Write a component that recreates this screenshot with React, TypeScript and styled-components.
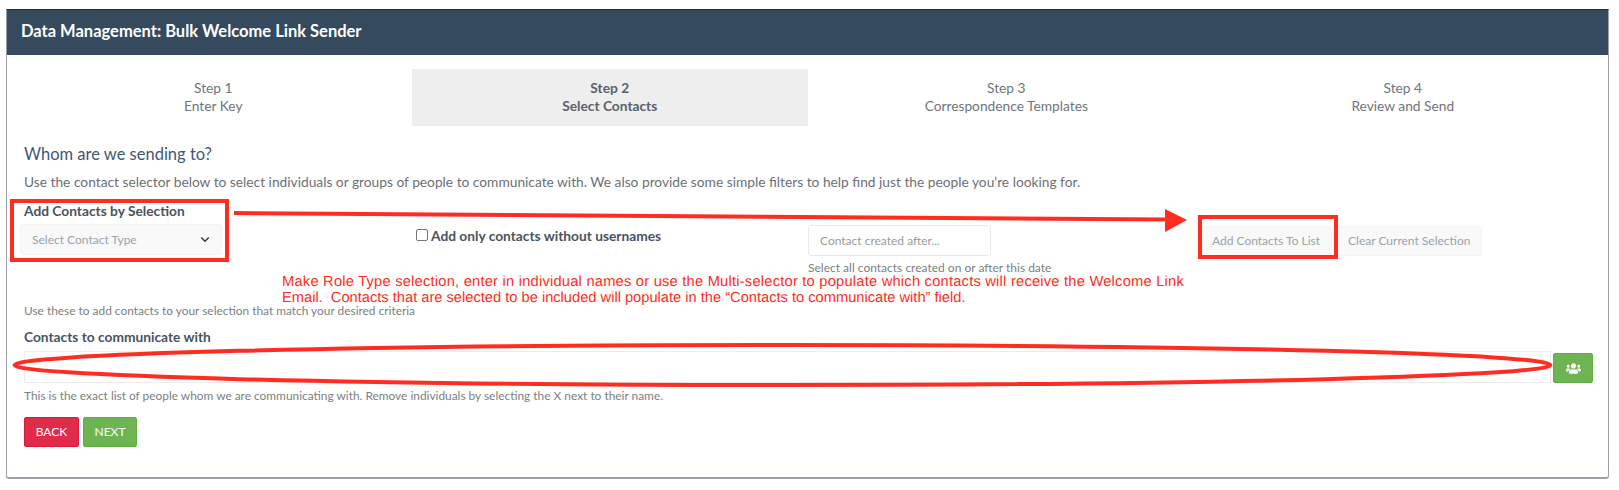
import React from 'react';
import styled, { createGlobalStyle } from 'styled-components';
import { FaUsers } from 'react-icons/fa';

const Global = createGlobalStyle`
  html, body { margin: 0; padding: 0; background: #fff; }
  body { font-family: Lato, "Open Sans", sans-serif; color: #6c7075; }
  * { box-sizing: border-box; }
`;

const Page = styled.div`
  position: relative;
  width: 1619px;
  height: 490px;
  padding: 9px 10px 12px 6px;
  overflow: hidden;
`;

const Panel = styled.section`
  height: 470px;
  border: 1px solid #9ba1a8;
  border-top-color: #12304f;
  border-bottom-width: 2px;
  border-radius: 0 0 3px 3px;
`;

const Header = styled.header`
  height: 45px;
  background: #364a5e;
  color: #fff;
  font-size: 16.5px;
  font-weight: 700;
  line-height: 43px;
  padding-left: 14px;
`;

const Body = styled.div`
  padding: 14px 9px 0 8px;
`;

const Steps = styled.div`
  display: grid;
  grid-template-columns: repeat(4, 396.5px);
`;

const Step = styled.div<{ $active?: boolean }>`
  height: 57px;
  padding-top: 10px;
  text-align: center;
  font-size: 13.75px;
  line-height: 18px;
  font-weight: ${(p) => (p.$active ? 700 : 400)};
  color: ${(p) => (p.$active ? '#5b626b' : '#6f757b')};
  background: ${(p) => (p.$active ? '#eeeeee' : 'transparent')};
`;

const Heading = styled.h2`
  margin: 16px 0 0 9px;
  font-size: 16.5px;
  line-height: 24px;
  font-weight: 400;
  color: #3f5873;
`;

const Lead = styled.p`
  margin: 6px 0 0 9px;
  font-size: 13.75px;
  line-height: 20px;
  color: #6c7075;
`;

const FilterRow = styled.div`
  display: grid;
  grid-template-columns: 392px 392px 392px 1fr;
  margin: 9px 0 0 5px;
  height: 101px;
`;

const Label = styled.label<{ $inset?: boolean }>`
  display: block;
  font-size: 13.75px;
  font-weight: 700;
  line-height: 20px;
  color: #4a5361;
  padding-left: ${(p) => (p.$inset ? '4px' : '0')};
`;

const SelectBox = styled.div`
  display: flex;
  align-items: center;
  justify-content: space-between;
  width: 202px;
  height: 31px;
  margin-top: 3px;
  padding: 0 11px 0 11px;
  border: 1px solid #f3f3f3;
  border-radius: 3px;
  background: #f9f9f9;
  font-size: 12px;
  color: #9aa3ab;
`;

const CheckCell = styled.div`
  display: flex;
  align-items: center;
  gap: 3px;
  height: 20px;
  margin: 24px 0 0 4px;
  font-size: 13.75px;
  font-weight: 700;
  color: #4a5361;
`;

const CheckBox = styled.span`
  width: 12px;
  height: 12px;
  border: 1px solid #767676;
  border-radius: 2px;
  background: #fff;
`;

const DateCell = styled.div`
  padding: 24px 0 0 4px;
`;

const DateInput = styled.div`
  width: 183px;
  height: 31px;
  padding-left: 11px;
  border: 1px solid #e8e8e8;
  border-radius: 3px;
  font-size: 12px;
  line-height: 29px;
  color: #9a9a9a;
`;

const Hint = styled.div`
  margin-top: 3px;
  font-size: 12px;
  line-height: 18px;
  color: #7b7f83;
`;

const ButtonCell = styled.div`
  display: flex;
  align-items: flex-start;
  gap: 4px;
  margin-top: 25px;
  padding-left: 4px;
`;

const GhostButton = styled.div`
  height: 30px;
  padding: 0 11px;
  border: 1px solid #f3f3f3;
  border-radius: 3px;
  background: #f9f9f9;
  font-size: 12px;
  line-height: 28px;
  color: #9aa3ab;
`;

const HelpText = styled.div`
  margin-left: 9px;
  font-size: 11.9px;
  line-height: 18px;
  color: #7b7f83;
`;

const ContactsLabel = styled(Label)`
  margin: 7px 0 0 9px;
`;

const ContactsRow = styled.div`
  display: flex;
  gap: 2px;
  margin: 4px 0 0 9px;
`;

const ContactsInput = styled.div`
  width: 1527px;
  height: 32px;
  border: 1px solid #ececec;
`;

const PeopleButton = styled.div`
  display: flex;
  align-items: center;
  justify-content: center;
  width: 40px;
  height: 30px;
  margin-top: 2px;
  background: #6cb552;
  border: 1px solid #5fae44;
  border-radius: 2px;
  color: #fff;
  font-size: 15px;
`;

const HelpBelow = styled(HelpText)`
  margin-top: 4px;
`;

const Actions = styled.div`
  display: flex;
  gap: 4px;
  margin: 12px 0 0 9px;
`;

const ActionButton = styled.div<{ $bg: string; $edge: string; $w: number }>`
  width: ${(p) => p.$w}px;
  height: 30px;
  text-align: center;
  border-radius: 2px;
  border: 1px solid ${(p) => p.$edge};
  background: ${(p) => p.$bg};
  color: #fff;
  font-size: 12px;
  line-height: 28px;
`;

const RedBox = styled.div<{ $x: number; $y: number; $w: number; $h: number }>`
  position: absolute;
  left: ${(p) => p.$x}px;
  top: ${(p) => p.$y}px;
  width: ${(p) => p.$w}px;
  height: ${(p) => p.$h}px;
  border: 4px solid #ff2d20;
`;

const Note = styled.div`
  position: absolute;
  left: 282px;
  top: 274px;
  width: 920px;
  font-family: "Liberation Sans", Arial, sans-serif;
  font-size: 14.67px;
  line-height: 16px;
  color: #ff2d20;
  text-rendering: geometricPrecision;
`;

const NoteLine = styled.div<{ $spread?: number }>`
  white-space: pre;
  letter-spacing: ${(p) => p.$spread ?? 0}px;
`;

const Marks = styled.svg`
  position: absolute;
  left: 0;
  top: 0;
  width: 1619px;
  height: 490px;
  pointer-events: none;
`;

export default function App() {
  return (
    <Page>
      <Global />
      <Panel>
        <Header>Data Management: Bulk Welcome Link Sender</Header>
        <Body>
          <Steps>
            <Step>Step 1<br />Enter Key</Step>
            <Step $active>Step 2<br />Select Contacts</Step>
            <Step>Step 3<br />Correspondence Templates</Step>
            <Step>Step 4<br />Review and Send</Step>
          </Steps>
          <Heading>Whom are we sending to?</Heading>
          <Lead>Use the contact selector below to select individuals or groups of people to communicate with. We also provide some simple filters to help find just the people you're looking for.</Lead>
          <FilterRow>
            <div>
              <Label $inset>Add Contacts by Selection</Label>
              <SelectBox>
                Select Contact Type
                <svg width="10" height="7" viewBox="0 0 12 8" fill="none" stroke="#33383d" strokeWidth="1.8"><path d="M1.5 1.5 6 6l4.5-4.5" /></svg>
              </SelectBox>
            </div>
            <CheckCell><CheckBox />Add only contacts without usernames</CheckCell>
            <DateCell>
              <DateInput>Contact created after...</DateInput>
              <Hint>Select all contacts created on or after this date</Hint>
            </DateCell>
            <ButtonCell>
              <GhostButton>Add Contacts To List</GhostButton>
              <GhostButton>Clear Current Selection</GhostButton>
            </ButtonCell>
          </FilterRow>
          <HelpText>Use these to add contacts to your selection that match your desired criteria</HelpText>
          <ContactsLabel>Contacts to communicate with</ContactsLabel>
          <ContactsRow>
            <ContactsInput />
            <PeopleButton><FaUsers /></PeopleButton>
          </ContactsRow>
          <HelpBelow>This is the exact list of people whom we are communicating with. Remove individuals by selecting the X next to their name.</HelpBelow>
          <Actions>
            <ActionButton $w={55} $bg="#e02c4b" $edge="#dc1a36">BACK</ActionButton>
            <ActionButton $w={54} $bg="#6cb552" $edge="#60b040">NEXT</ActionButton>
          </Actions>
        </Body>
      </Panel>
      <RedBox $x={10} $y={199} $w={219} $h={63} />
      <RedBox $x={1198} $y={215} $w={140} $h={44} />
      <Marks viewBox="0 0 1619 490">
        <path d="M234 213 L1166 219.5" stroke="#ff2d20" strokeWidth="4" fill="none" />
        <polygon points="1165,209 1187,220 1165,232" fill="#ff2d20" />
        <ellipse cx="782.5" cy="365" rx="768" ry="20" stroke="#ff2d20" strokeWidth="4" fill="none" />
      </Marks>
      <Note>
        <NoteLine $spread={0.23}>Make Role Type selection, enter in individual names or use the Multi-selector to populate which contacts will receive the Welcome Link</NoteLine>
        <NoteLine>{'Email.  Contacts that are selected to be included will populate in the “Contacts to communicate with” field.'}</NoteLine>
      </Note>
    </Page>
  );
}
